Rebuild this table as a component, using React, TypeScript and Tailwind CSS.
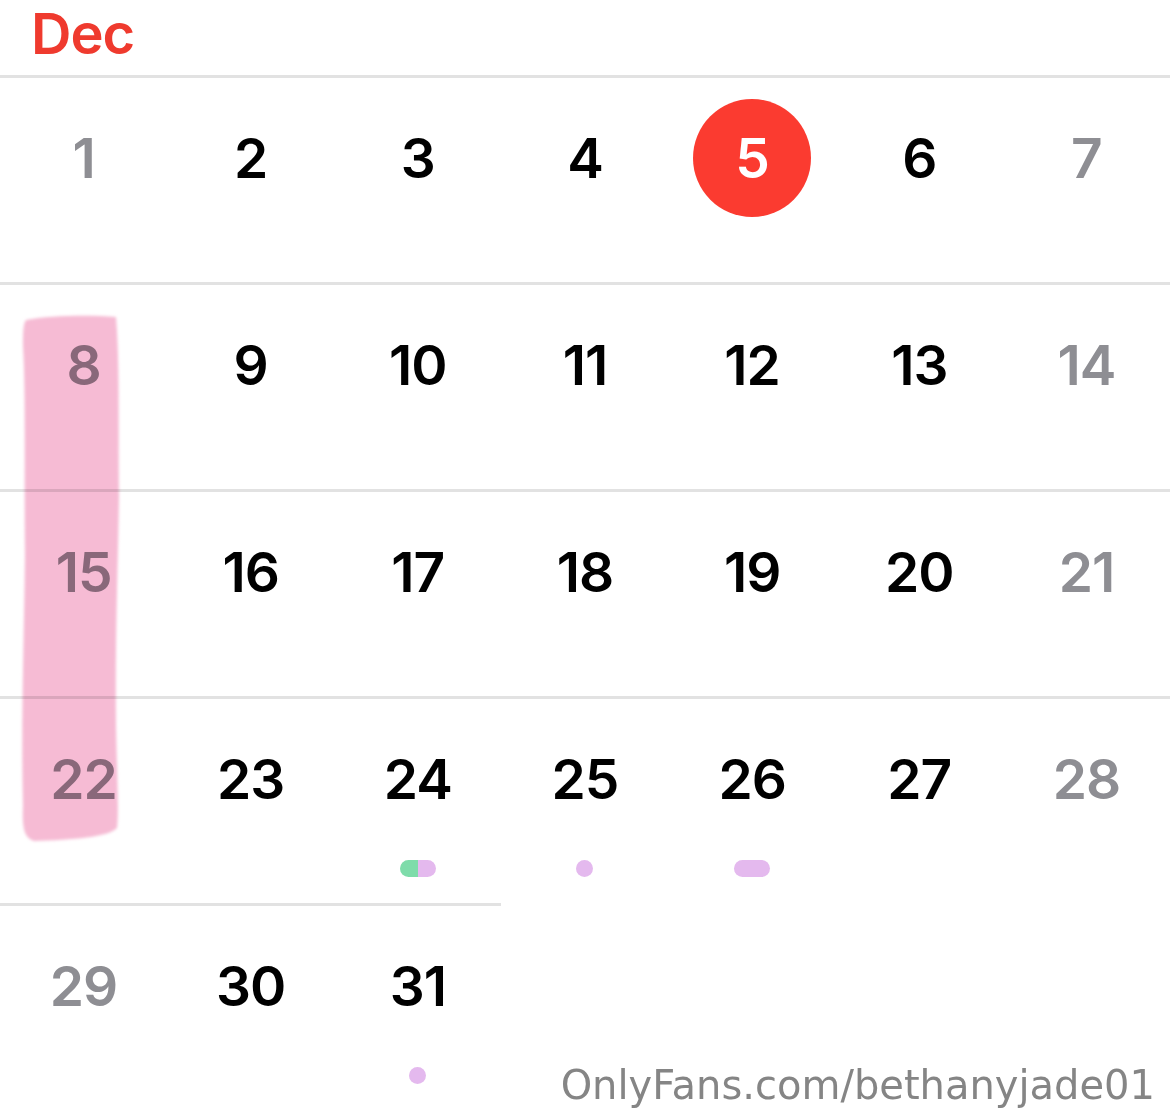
import React from 'react';

type Dot = 'none' | 'dot' | 'pill' | 'split';

type Day = { n: number; weekend?: boolean; today?: boolean; dot?: Dot };

const weeks: Day[][] = [
  [{ n: 1, weekend: true }, { n: 2 }, { n: 3 }, { n: 4 }, { n: 5, today: true }, { n: 6 }, { n: 7, weekend: true }],
  [{ n: 8, weekend: true }, { n: 9 }, { n: 10 }, { n: 11 }, { n: 12 }, { n: 13 }, { n: 14, weekend: true }],
  [{ n: 15, weekend: true }, { n: 16 }, { n: 17 }, { n: 18 }, { n: 19 }, { n: 20 }, { n: 21, weekend: true }],
  [
    { n: 22, weekend: true },
    { n: 23 },
    { n: 24, dot: 'split' },
    { n: 25, dot: 'dot' },
    { n: 26, dot: 'pill' },
    { n: 27 },
    { n: 28, weekend: true },
  ],
  [{ n: 29, weekend: true }, { n: 30 }, { n: 31, dot: 'dot' }],
];

function EventDot({ kind }: { kind?: Dot }) {
  if (kind === 'dot') return <div className="w-[17px] h-[17px] rounded-full bg-[#e4b9ee]" />;
  if (kind === 'pill') return <div className="w-[36px] h-[17px] rounded-full bg-[#e4b9ee]" />;
  if (kind === 'split')
    return (
      <div className="w-[36px] h-[17px] rounded-full overflow-hidden flex">
        <div className="flex-1 bg-[#7edcaa]" />
        <div className="flex-1 bg-[#e4b9ee]" />
      </div>
    );
  return <div className="h-[17px]" />;
}

function DayCell({ day }: { day: Day }) {
  return (
    <div className="border-t-[3px] border-[#e2e2e2] h-[207px] flex flex-col items-center">
      <div className="mt-[21px] h-[118px] w-[118px] flex items-center justify-center">
        {day.today ? (
          <div className="w-[118px] h-[118px] rounded-full bg-[#fb3b30] flex items-center justify-center text-white">
            {day.n}
          </div>
        ) : (
          <span className={day.weekend ? 'text-[#8e8e93]' : 'text-black'}>{day.n}</span>
        )}
      </div>
      <div className="mt-[22px]">
        <EventDot kind={day.dot} />
      </div>
    </div>
  );
}

// pink marker stroke drawn over the first column
function Highlighter() {
  return (
    <svg
      className="absolute left-[12px] top-[306px] mix-blend-multiply pointer-events-none"
      width="120"
      height="545"
      viewBox="0 0 120 545"
    >
      <defs>
        <filter id="soft" x="-10%" y="-5%" width="120%" height="110%">
          <feGaussianBlur stdDeviation="1.6" />
        </filter>
      </defs>
      <path
        d="M14 14 C 40 9, 80 9, 104 11 C 108 60, 106 120, 107 190 C 106 260, 103 330, 104 420 C 105 470, 107 505, 105 522 C 97 531, 60 534, 22 535 C 12 532, 10 522, 11 500 C 9 420, 12 330, 13 250 C 12 170, 14 90, 11 40 C 11 28, 11 18, 14 14 Z"
        fill="#f6bbd4"
        filter="url(#soft)"
      />
    </svg>
  );
}

export default function App() {
  return (
    <div className="relative w-[1170px] h-[1119px] bg-white overflow-hidden" style={{ fontFamily: 'Inter, "Liberation Sans", sans-serif' }}>
      <div className="h-[75px] pl-[31px] pt-[2px] text-[56px] leading-[64px] font-semibold text-[#ef3a2e] tracking-[-1px]">Dec</div>
      <div className="text-[55px] leading-none font-semibold tracking-[-1px]">
        {weeks.map((week, i) => (
          <div key={i} className="grid grid-cols-7">
            {week.map((d) => (
              <DayCell key={d.n} day={d} />
            ))}
          </div>
        ))}
      </div>

      <Highlighter />

      <div
        className="absolute right-[15px] bottom-[14px] text-[40px] leading-none text-[#858585]"
        style={{ fontFamily: '"DejaVu Sans", sans-serif' }}
      >
        OnlyFans.com/bethanyjade01
      </div>
    </div>
  );
}
